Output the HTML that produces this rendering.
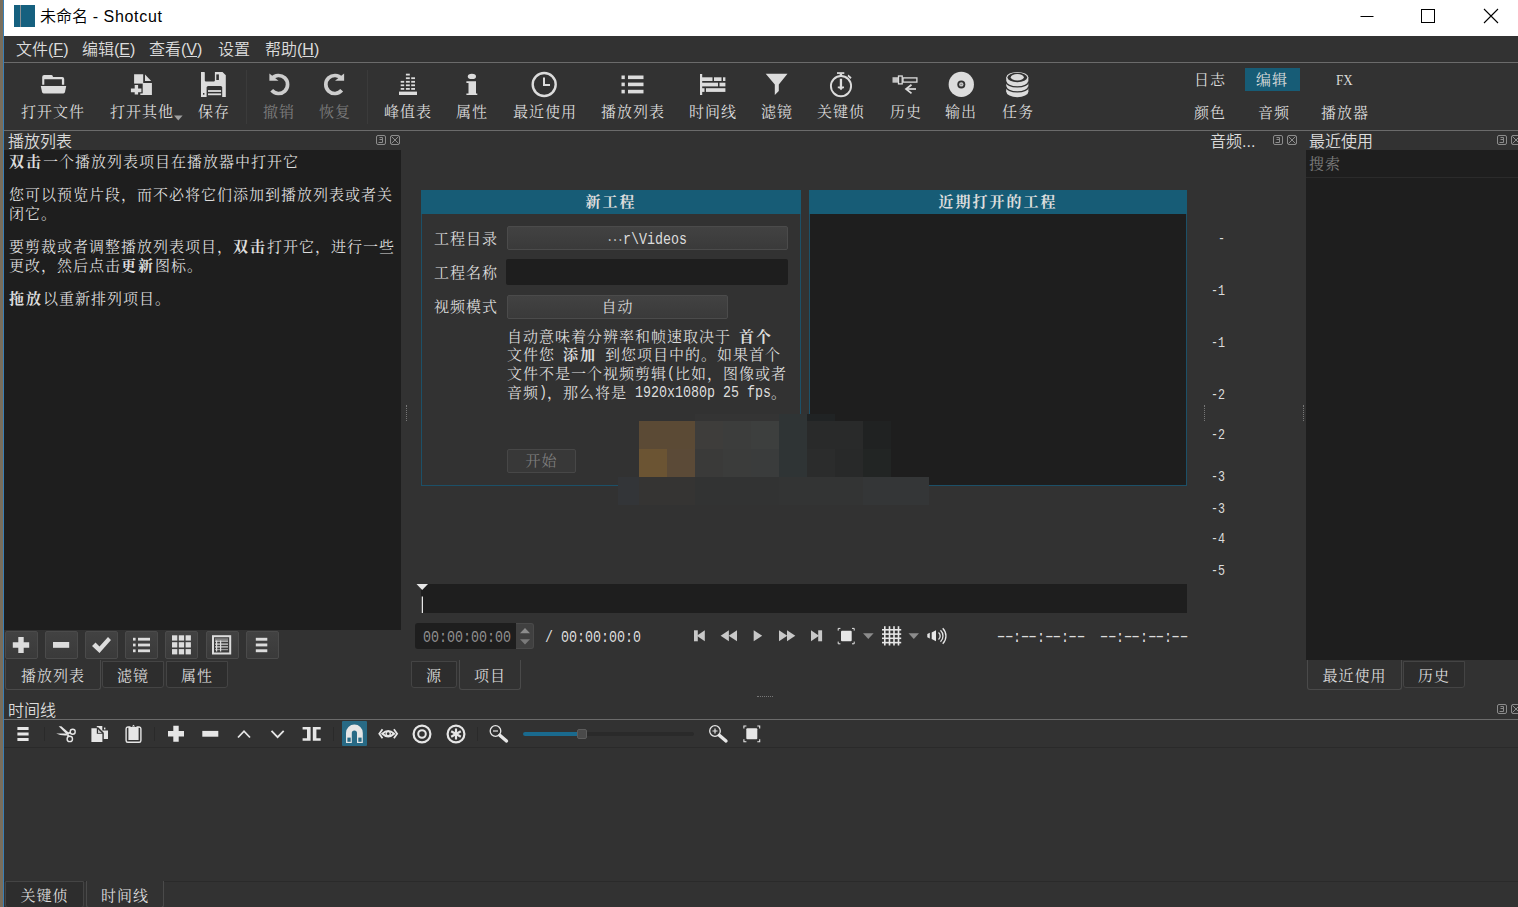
<!DOCTYPE html>
<html lang="zh-CN">
<head>
<meta charset="utf-8">
<title>未命名 - Shotcut</title>
<style>
*{box-sizing:border-box;margin:0;padding:0}
html,body{width:1518px;height:907px;overflow:hidden;background:#323232}
body{position:relative;color:#dcdcdc;word-spacing:3.25px;font-family:"Liberation Serif","Noto Serif CJK SC",serif;font-size:15px;letter-spacing:1px;line-height:18px}
.a{position:absolute}
.ui{font-family:"Liberation Sans","Noto Sans CJK SC",sans-serif;font-size:16px;letter-spacing:0;word-spacing:0;font-weight:350}
.mono{font-family:"Liberation Mono","Noto Serif CJK SC",monospace;font-size:13.4px;letter-spacing:0}
.t{position:absolute;white-space:nowrap;line-height:18px;height:18px}
.sm{font-family:"Liberation Mono",monospace;font-size:16px;letter-spacing:0;word-spacing:0;transform:scaleX(.8333);transform-origin:0 50%}
.sm2{font-family:"Liberation Mono",monospace;font-size:15px;letter-spacing:0;word-spacing:0;transform:scaleX(.7777);transform-origin:0 50%}
.dh{display:inline-block;transform:scaleX(1.7);position:relative;top:-1px}
.dark{background:#1e1e1e}
.hl{background:#175c76}
.dim{color:#7d7d7d}
b{font-weight:700;letter-spacing:2px}
svg{position:absolute;overflow:visible}
.tab{position:absolute;height:27px;border:1px solid #444;border-radius:0 0 3px 3px;text-align:center;line-height:28px;background:#2d2d2d}
.tab.sel{background:#323232;height:30px;border-color:#4a4a4a;border-top:none;line-height:33px}
.btn{position:absolute;border:1px solid #4b4b4b;border-radius:2px;background:linear-gradient(#424242,#3a3a3a);text-align:center}
.sep{position:absolute;width:1px;background:#454545}
</style>
</head>
<body>
<!-- desktop edge + window border -->
<div class="a" style="left:0;top:0;width:3px;height:907px;background:#786d5c"></div>
<div class="a" style="left:3px;top:0;width:1px;height:907px;background:#3a7fb5"></div>

<!-- title bar -->
<div class="a" id="titlebar" style="left:4px;top:0;width:1514px;height:36px;background:#fff"></div>
<div class="a" style="left:14px;top:5px;width:21px;height:22px;background:#15607f"></div>
<div class="a" style="left:20px;top:5px;width:1px;height:22px;background:#8a8f93"></div>
<div class="t ui" style="left:40px;top:7px;color:#000;font-size:16px;line-height:20px;height:20px">未命名<span style="letter-spacing:.7px;word-spacing:-0.400px"> - Shotcut</span></div>
<svg style="left:1355px;top:5px" width="160" height="24" viewBox="0 0 160 24">
 <path d="M5.5 11.5H18.5" stroke="#000" stroke-width="1" fill="none"/>
 <rect x="66.5" y="4.5" width="13" height="13" stroke="#000" stroke-width="1" fill="none"/>
 <path d="M129 4L143 18M143 4L129 18" stroke="#000" stroke-width="1.1" fill="none"/>
</svg>

<!-- menu bar -->
<div id="menubar" class="ui" style="font-size:16px">
 <div class="t" style="left:16px;top:41px">文件(<u>F</u>)</div>
 <div class="t" style="left:82px;top:41px">编辑(<u>E</u>)</div>
 <div class="t" style="left:149px;top:41px">查看(<u>V</u>)</div>
 <div class="t" style="left:218px;top:41px">设置</div>
 <div class="t" style="left:265px;top:41px">帮助(<u>H</u>)</div>
</div>
<div class="a" style="left:4px;top:62px;width:1514px;height:1px;background:#6b6b6b"></div>

<!-- main toolbar -->
<div id="toolbar">
 <div class="t" style="left:21px;top:103px">打开文件</div>
 <div class="t" style="left:110px;top:103px">打开其他</div>
 <div class="t" style="left:198px;top:103px">保存</div>
 <div class="t dim" style="left:263px;top:103px">撤销</div>
 <div class="t dim" style="left:319px;top:103px">恢复</div>
 <div class="t" style="left:384px;top:103px">峰值表</div>
 <div class="t" style="left:456px;top:103px">属性</div>
 <div class="t" style="left:513px;top:103px">最近使用</div>
 <div class="t" style="left:601px;top:103px">播放列表</div>
 <div class="t" style="left:689px;top:103px">时间线</div>
 <div class="t" style="left:761px;top:103px">滤镜</div>
 <div class="t" style="left:817px;top:103px">关键侦</div>
 <div class="t" style="left:890px;top:103px">历史</div>
 <div class="t" style="left:945px;top:103px">输出</div>
 <div class="t" style="left:1002px;top:103px">任务</div>
 <div class="sep" style="left:246px;top:70px;height:54px;background:#3b3b3b"></div>
 <div class="sep" style="left:367px;top:70px;height:54px;background:#3b3b3b"></div>
 <div class="a hl" style="left:1245px;top:68px;width:55px;height:23px"></div>
 <div class="t" style="left:1194px;top:71px">日志</div>
 <div class="t" style="left:1256px;top:71px">编辑</div>
 <div class="t" style="left:1336px;top:71px;letter-spacing:0;font-size:15.500px;transform:scaleX(.84);transform-origin:0 50%">FX</div>
 <div class="t" style="left:1194px;top:104px">颜色</div>
 <div class="t" style="left:1258px;top:104px">音频</div>
 <div class="t" style="left:1321px;top:104px">播放器</div>
 <svg style="left:0;top:63px" width="1518" height="67" viewBox="0 63 1518 67" fill="#dcdcdc">
  <!-- open file: folder -->
  <path d="M42.200 84.700V77Q42.200 75 44.200 75H51.500Q52.800 75 53 77H62.200Q64.200 77 64.200 79V84.700H61.900V79.300H44.300V84.700Z"/>
  <path d="M40.800 86H66.200L65 92Q64.700 93.400 63.400 93.400H43.600Q42.300 93.400 42 92Z"/>
  <!-- open other: doc with plus -->
  <path d="M134.100 74.200H143.200V82.900H151.900V95H134.100Z"/>
  <path d="M145 74.500L151.200 81H145Z"/>
  <rect x="129.500" y="83.600" width="13.200" height="12" fill="#323232"/>
  <rect x="140.300" y="93.400" width="3" height="1.600"/>
  <path d="M134.700 85H138.100V88.400H141.400V92.200H138.100V94.500H134.700V92.200H130.900V88.400H134.700Z"/>
  <path d="M174 115.500H182.600L178.300 120.500Z" fill="#a0a0a0"/>
  <!-- save: floppy -->
  <path d="M201 72H222.500L225.800 75.300V97H201Z"/>
  <g fill="#323232">
   <rect x="204.800" y="71.500" width="10.100" height="9.900" rx="0.800"/>
   <rect x="216.300" y="74.400" width="2.600" height="5.600"/>
   <path d="M206.600 97.500V87.600Q206.600 86.100 208.100 86.100H220.700Q222.200 86.100 222.200 87.600V97.500Z"/>
   <rect x="203" y="93" width="1.400" height="1.700"/>
  </g>
  <rect x="208" y="90.100" width="13.100" height="1.800"/>
  <rect x="208" y="93.400" width="13.100" height="1.800"/>
  <!-- undo -->
  <g fill="none" stroke="#cdcdcd" stroke-width="3.700">
   <path d="M271.700 78.700A9 9 0 1 1 271.700 90.300"/>
   <path d="M341.700 78.700A9 9 0 1 0 341.700 90.300"/>
  </g>
  <path d="M269.400 73.600V80.800H278.500Z" fill="#cdcdcd"/>
  <path d="M344.100 73.600V80.800H335Z" fill="#cdcdcd"/>
  <!-- peak meter -->
  <g>
   <rect x="399" y="91.600" width="18" height="3.400"/>
   <rect x="400.7" y="80.90" width="3.500" height="1.800"/><rect x="400.7" y="84.40" width="3.500" height="1.800"/><rect x="400.7" y="88.00" width="3.500" height="1.800"/><rect x="405.9" y="73.70" width="3.900" height="1.800"/><rect x="405.9" y="77.30" width="3.900" height="1.800"/><rect x="405.9" y="80.90" width="3.900" height="1.800"/><rect x="405.9" y="84.40" width="3.900" height="1.800"/><rect x="405.9" y="88.00" width="3.900" height="1.800"/><rect x="411.2" y="77.30" width="3.800" height="1.800"/><rect x="411.2" y="80.90" width="3.800" height="1.800"/><rect x="411.2" y="84.40" width="3.800" height="1.800"/><rect x="411.2" y="88.00" width="3.800" height="1.800"/>
  </g>
  <!-- info -->
  <ellipse cx="471.900" cy="76.400" rx="4.100" ry="2.700"/>
  <path d="M466.400 81.200H476V93.400H477.300V95H466.400V93.400H468.500V83H466.400Z"/>
  <!-- recent: clock -->
  <circle cx="544.200" cy="84.500" r="11.500" fill="none" stroke="#dcdcdc" stroke-width="2.400"/>
  <path d="M543 77.500H545V84H550V86H543Z"/>
  <!-- playlist -->
  <g>
   <rect x="621.500" y="75.500" width="3.300" height="3.600"/><rect x="628" y="75.500" width="15.500" height="3.600"/>
   <rect x="621.500" y="82.600" width="3.300" height="3.600"/><rect x="628" y="82.600" width="15.500" height="3.600"/>
   <rect x="621.500" y="89.800" width="3.300" height="3.600"/><rect x="628" y="89.800" width="15.500" height="3.600"/>
  </g>
  <!-- timeline -->
  <g>
   <rect x="700" y="74" width="2.200" height="21"/>
   <rect x="702" y="77.300" width="10.500" height="3.700"/><rect x="714" y="77.300" width="7.500" height="3.700"/><rect x="723" y="77.300" width="2.400" height="3.700"/>
   <rect x="702" y="82.700" width="16" height="3.700"/><rect x="719.500" y="82.700" width="5.900" height="3.700"/>
   <rect x="702" y="88.200" width="2.500" height="3.700"/><rect x="706" y="88.200" width="19.400" height="3.700"/>
  </g>
  <!-- filter -->
  <path d="M765.700 73.800H787.500L778.800 84.500V91L774.800 95V84.500Z"/>
  <!-- keyframes: stopwatch -->
  <circle cx="841" cy="86.100" r="10.100" fill="none" stroke="#dcdcdc" stroke-width="1.900"/>
  <rect x="837" y="72.200" width="7.300" height="1.700"/><rect x="839.700" y="73.500" width="2.400" height="2.800"/>
  <path d="M848.300 74.600L851.600 77.600L850.300 79L847.600 76.200Z"/>
  <path d="M839.800 78.700H842.100V86.600H844V88.200H842.800L841 90.200L839.200 88.200H837.800V86.600H839.800Z"/>
  <!-- history -->
  <rect x="892.500" y="77.200" width="5.600" height="5.500" fill="#c4c4c4"/>
  <rect x="898.500" y="76" width="3.700" height="7.900" fill="none" stroke="#dcdcdc" stroke-width="1.300"/>
  <rect x="903" y="77.900" width="13.900" height="4.200" fill="none" stroke="#dcdcdc" stroke-width="1.300"/>
  <path d="M916 89H906.500" stroke="#dcdcdc" stroke-width="1.700" fill="none"/>
  <path d="M911.500 84.800L906 89L911.500 93.300" stroke="#dcdcdc" stroke-width="1.700" fill="none"/>
  <!-- export: disc -->
  <circle cx="961.300" cy="84.400" r="12.650"/>
  <circle cx="961.300" cy="84.400" r="4" fill="#323232"/><circle cx="961.300" cy="84.400" r="2.200" fill="#c4c4c4"/><ellipse cx="961.300" cy="84.400" rx="1.100" ry="0.600" fill="#8a8a8a"/>
  <!-- jobs: stack -->
  <g>
   <ellipse cx="1017.300" cy="91.700" rx="11.050" ry="5.500"/>
   <rect x="1006.250" y="77.500" width="22.100" height="14.200"/>
   <ellipse cx="1017.300" cy="77.500" rx="11.050" ry="5.500"/>
   <ellipse cx="1017.300" cy="77.500" rx="9.900" ry="4.700" fill="#323232"/>
   <ellipse cx="1017.300" cy="77.300" rx="6.500" ry="3.200"/>
   <g fill="none" stroke="#323232" stroke-width="1.300">
    <path d="M1006 81.500A11.300 5.400 0 0 0 1028.600 81.500"/>
    <path d="M1006 86.500A11.300 5.400 0 0 0 1028.600 86.500"/>
   </g>
  </g>
 </svg>
</div>
<div class="a" style="left:4px;top:130px;width:1514px;height:1px;background:#6b6b6b"></div>

<!-- playlist dock -->
<div id="playlist">
 <div class="t ui" style="left:8px;top:132px;line-height:20px;height:20px">播放列表</div>
 <svg style="left:376px;top:135px" width="24" height="10" viewBox="0 0 24 10" fill="none" stroke="#8c8c8c" stroke-width="1">
  <rect x="0.500" y="0.500" width="9" height="9" rx="1.500"/><path d="M3.500 2.500H6.500V7.500H2.500M6.500 4.500H3.500"/>
  <rect x="14.500" y="0.500" width="9" height="9" rx="1.500"/><path d="M15.500 1.500L22.500 8.500M22.500 1.500L15.500 8.500"/>
 </svg>
 <div class="a dark" style="left:4px;top:150px;width:397px;height:480px"></div>
 <div class="t" style="left:9px;top:153px"><b>双击</b>一个播放列表项目在播放器中打开它</div>
 <div class="t" style="left:9px;top:186px">您可以预览片段，而不必将它们添加到播放列表或者关</div>
 <div class="t" style="left:9px;top:205px">闭它。</div>
 <div class="t" style="left:9px;top:238px">要剪裁或者调整播放列表项目，<b>双击</b>打开它，进行一些</div>
 <div class="t" style="left:9px;top:257px">更改，然后点击<b>更新</b>图标。</div>
 <div class="t" style="left:9px;top:290px"><b>拖放</b>以重新排列项目。</div>
 <div class="btn" style="left:5px;top:631px;width:33px;height:28px"></div>
 <div class="btn" style="left:45px;top:631px;width:33px;height:28px"></div>
 <div class="btn" style="left:85px;top:631px;width:33px;height:28px"></div>
 <div class="btn" style="left:125px;top:631px;width:33px;height:28px"></div>
 <div class="btn" style="left:165px;top:631px;width:33px;height:28px"></div>
 <div class="btn" style="left:206px;top:631px;width:33px;height:28px"></div>
 <div class="btn" style="left:246px;top:631px;width:33px;height:28px"></div>
 <svg style="left:0;top:631px" width="300" height="28" viewBox="0 631 300 28" fill="#dcdcdc">
  <path d="M18.300 637H23.700V642.300H29.200V647.700H23.700V653H18.300V647.700H12.800V642.300H18.300Z"/>
  <rect x="53" y="642" width="16.200" height="5.800"/>
  <path d="M92 646L95.500 642.500L99.500 646.500L108 637L111 640L99.500 653Z"/>
  <g>
   <rect x="133" y="637.800" width="2.600" height="2.800"/><rect x="138" y="637.800" width="12" height="2.800"/>
   <rect x="133" y="643.600" width="2.600" height="2.800"/><rect x="138" y="643.600" width="12" height="2.800"/>
   <rect x="133" y="649.400" width="2.600" height="2.800"/><rect x="138" y="649.400" width="12" height="2.800"/>
  </g>
  <g>
   <rect x="172" y="635.300" width="5.300" height="5.300"/><rect x="178.800" y="635.300" width="5.300" height="5.300"/><rect x="185.600" y="635.300" width="5.300" height="5.300"/>
   <rect x="172" y="642.200" width="5.300" height="5.300"/><rect x="178.800" y="642.200" width="5.300" height="5.300"/><rect x="185.600" y="642.200" width="5.300" height="5.300"/>
   <rect x="172" y="649.100" width="5.300" height="5.300"/><rect x="178.800" y="649.100" width="5.300" height="5.300"/><rect x="185.600" y="649.100" width="5.300" height="5.300"/>
  </g>
  <g>
   <rect x="213" y="636.200" width="17.200" height="17.300" fill="none" stroke="#dcdcdc" stroke-width="2"/>
   <rect x="215" y="638.500" width="13" height="1.200" fill="#9a9a9a"/><rect x="215" y="640.500" width="13" height="1.200"/>
   <rect x="215" y="643.500" width="13" height="1.200"/><rect x="215" y="646.300" width="13" height="1.200"/><rect x="215" y="649" width="13" height="1.200" fill="#9a9a9a"/>
   <rect x="216" y="640.500" width="1.200" height="11"/><rect x="220" y="640.500" width="1.200" height="11"/>
  </g>
  <g>
   <rect x="255.800" y="637.800" width="11.500" height="2.900"/><rect x="255.800" y="643.500" width="11.500" height="2.900"/><rect x="255.800" y="649.300" width="11.500" height="2.900"/>
  </g>
 </svg>
 <div class="tab" style="left:102px;top:661px;width:62px">滤镜</div>
 <div class="tab" style="left:166px;top:661px;width:62px">属性</div>
 <div class="tab sel" style="left:5px;top:660px;width:96px">播放列表</div>
</div>

<!-- player -->
<div id="player">
 <!-- new project box -->
 <div class="a" style="left:421px;top:190px;width:380px;height:296px;border:1px solid #1c5068"></div>
 <div class="a hl" style="left:421px;top:190px;width:380px;height:24px;text-align:center;line-height:24px"><b>新工程</b></div>
 <div class="t" style="left:434px;top:230px">工程目录</div>
 <div class="btn" style="left:507px;top:226px;width:281px;height:24px;line-height:23px"><span class="a" style="left:99px;top:1px;font-family:'Noto Serif CJK SC',serif;letter-spacing:0;font-size:16px">…</span><span class="a sm" style="left:115px;top:2px;white-space:nowrap">r\Videos</span></div>
 <div class="t" style="left:434px;top:264px">工程名称</div>
 <div class="a dark" style="left:506px;top:259px;width:282px;height:26px;border-radius:2px"></div>
 <div class="t" style="left:434px;top:298px">视频模式</div>
 <div class="btn" style="left:507px;top:295px;width:221px;height:24px;line-height:23px">自动</div>
 <div class="t" style="left:507px;top:328px">自动意味着分辨率和帧速取决于 <b>首个</b></div>
 <div class="t" style="left:507px;top:346px">文件您 <b>添加</b> 到您项目中的。如果首个</div>
 <div class="t" style="left:507px;top:365px">文件不是一个视频剪辑<span class="a sm" style="left:160px">(</span><span style="margin-left:8px">比如，图像或者</span></div>
 <div class="t" style="left:507px;top:384px">音频<span class="a sm" style="left:32px">)</span><span style="margin-left:8px">，那么将是</span><span class="a sm" style="left:128px;white-space:nowrap">1920x1080p 25 fps</span><span class="a" style="left:264px">。</span></div>
 <div class="btn dim" style="left:507px;top:449px;width:69px;height:24px;line-height:23px;background:#383838;border-color:#474747">开始</div>
 <!-- recent projects box -->
 <div class="a dark" style="left:809px;top:190px;width:378px;height:296px;border:1px solid #1c5068"></div>
 <div class="a hl" style="left:809px;top:190px;width:378px;height:24px;text-align:center;line-height:24px"><b>近期打开的工程</b></div>
 <!-- pixelated patch -->
 <div class="a" style="left:695px;top:414px;width:84px;height:7px;background:#343434"></div>
 <div class="a" style="left:779px;top:414px;width:28px;height:7px;background:#2f3435"></div>
 <div class="a" style="left:807px;top:414px;width:28px;height:7px;background:#202324"></div>
 <div class="a" style="left:639px;top:421px;width:56px;height:28px;background:#5b4a35"></div>
 <div class="a" style="left:695px;top:421px;width:28px;height:28px;background:#3e3d3b"></div>
 <div class="a" style="left:723px;top:421px;width:28px;height:28px;background:#3c3d3c"></div>
 <div class="a" style="left:751px;top:421px;width:28px;height:28px;background:#3d3f3e"></div>
 <div class="a" style="left:779px;top:421px;width:28px;height:28px;background:#2f3435"></div>
 <div class="a" style="left:807px;top:421px;width:56px;height:28px;background:#292a2a"></div>
 <div class="a" style="left:863px;top:421px;width:28px;height:28px;background:#202222"></div>
 <div class="a" style="left:639px;top:449px;width:28px;height:28px;background:#6b5433"></div>
 <div class="a" style="left:667px;top:449px;width:28px;height:28px;background:#5b4a37"></div>
 <div class="a" style="left:695px;top:449px;width:28px;height:28px;background:#3a3a39"></div>
 <div class="a" style="left:723px;top:449px;width:28px;height:28px;background:#3b3c3b"></div>
 <div class="a" style="left:751px;top:449px;width:28px;height:28px;background:#3a3c3c"></div>
 <div class="a" style="left:779px;top:449px;width:28px;height:28px;background:#2f3435"></div>
 <div class="a" style="left:807px;top:449px;width:28px;height:28px;background:#2b2c2c"></div>
 <div class="a" style="left:835px;top:449px;width:28px;height:28px;background:#282929"></div>
 <div class="a" style="left:863px;top:449px;width:28px;height:28px;background:#222524"></div>
 <div class="a" style="left:618px;top:477px;width:21px;height:28px;background:#333538"></div>
 <div class="a" style="left:639px;top:477px;width:56px;height:28px;background:#353433"></div>
 <div class="a" style="left:695px;top:477px;width:84px;height:28px;background:#323333"></div>
 <div class="a" style="left:779px;top:477px;width:84px;height:28px;background:#333434"></div>
 <div class="a" style="left:863px;top:477px;width:66px;height:28px;background:#343637"></div>
 <!-- scrub bar -->
 <div class="a dark" style="left:421px;top:584px;width:766px;height:29px"></div>
 <svg style="left:414px;top:582px" width="20" height="32" viewBox="414 582 20 32"><path d="M416.500 584H428L422.200 590Z" fill="#e6e6e6"/><rect x="421.700" y="596.500" width="1.300" height="16.500" fill="#e6e6e6"/></svg>
 <!-- timecode -->
 <div class="a dark" style="left:415px;top:623px;width:101px;height:26px;border-radius:3px 0 0 3px"></div>
 <div class="a" style="left:516px;top:623px;width:18px;height:26px;background:#404040;border:1px solid #4a4a4a;border-left:none;border-radius:0 3px 3px 0"></div>
 <div class="t sm" style="left:423px;top:629px;color:#8f8f8f">00:00:00:00</div>
 <div class="t sm" style="left:545px;top:629px;width:115px;overflow:hidden">/ 00:00:00:00</div>
 <div class="t sm" style="left:997px;top:629px"><span class="dh">-</span><span class="dh">-</span>:<span class="dh">-</span><span class="dh">-</span>:<span class="dh">-</span><span class="dh">-</span>:<span class="dh">-</span><span class="dh">-</span></div>
 <div class="t sm" style="left:1100px;top:629px"><span class="dh">-</span><span class="dh">-</span>:<span class="dh">-</span><span class="dh">-</span>:<span class="dh">-</span><span class="dh">-</span>:<span class="dh">-</span><span class="dh">-</span></div>
 <svg style="left:500px;top:620px" width="460" height="32" viewBox="500 620 460 32" fill="#c8c8c8">
  <path d="M520 633.200H530L525 628Z" fill="#8c8c8c"/><path d="M520 639.200H530L525 644.600Z" fill="#7a7a7a"/>
  <!-- skip prev -->
  <rect x="694" y="630.300" width="3.800" height="11"/><path d="M704.800 630.300V641.300L696.800 635.800Z"/>
  <!-- rewind -->
  <path d="M728.900 630.300V641.300L720.600 635.800Z"/><path d="M737 630.300V641.300L728.700 635.800Z"/>
  <!-- play -->
  <path d="M753.700 630.200V641.300L762.200 635.800Z"/>
  <!-- ff -->
  <path d="M779 630.300V641.300L787.300 635.800Z"/><path d="M787 630.300V641.300L795.300 635.800Z"/>
  <!-- skip next -->
  <path d="M811 630.300V641.300L819 635.800Z"/><rect x="818.200" y="630.300" width="3.900" height="11"/>
  <!-- zoom fit -->
  <rect x="841" y="630.800" width="10.700" height="10.500" rx="1" fill="#e6e6e6"/>
  <path d="M838.200 630.600V628.400H840.400M852 628.400H854.200V630.600M854.200 641.600V643.800H852M840.400 643.800H838.200V641.600" fill="none" stroke="#e6e6e6" stroke-width="1"/>
  <path d="M863 633.300H873.600L868.300 639Z" fill="#8c8c8c"/>
  <!-- grid -->
  <g fill="#e6e6e6">
   <rect x="884" y="626.200" width="1.600" height="19.300"/><rect x="888.700" y="626.200" width="1.600" height="19.300"/><rect x="893.200" y="626.200" width="1.600" height="19.300"/><rect x="897.700" y="626.200" width="1.600" height="19.300"/>
   <rect x="882" y="629" width="19.200" height="1.600"/><rect x="882" y="633.300" width="19.200" height="1.600"/><rect x="882" y="637.500" width="19.200" height="1.600"/><rect x="882" y="641.800" width="19.200" height="1.600"/>
  </g>
  <path d="M908.500 633.300H919L913.800 639Z" fill="#8c8c8c"/>
  <!-- volume -->
  <g fill="#e6e6e6">
   <path d="M927.300 634L929.800 632.800V638.400L927.300 637.200Z"/>
   <path d="M931.700 632.400L936 630.200V641.200L931.700 639Z"/>
  </g>
  <g fill="none" stroke="#e6e6e6" stroke-width="1.300">
   <path d="M938.500 632.500A4.500 4.500 0 0 1 938.500 639.500"/>
   <path d="M940.500 630.200A8 8 0 0 1 940.500 641.800"/>
   <path d="M942.700 628.200A11 11 0 0 1 942.700 643.800"/>
  </g>
 </svg>
 <div class="tab" style="left:411px;top:661px;width:46px">源</div>
 <div class="tab sel" style="left:459px;top:660px;width:62px">项目</div>
 <!-- splitter handles -->
 <div class="a" style="left:406px;top:405px;width:1px;height:16px;border-left:1px dotted #777"></div>
 <div class="a" style="left:1204px;top:405px;width:1px;height:16px;border-left:1px dotted #777"></div>
 <div class="a" style="left:1303px;top:405px;width:1px;height:16px;border-left:1px dotted #777"></div>
 <div class="a" style="left:757px;top:696px;width:16px;height:1px;border-top:1px dotted #777"></div>
</div>

<!-- audio meter dock -->
<div id="audio">
 <div class="t ui" style="left:1210px;top:132px;line-height:20px;height:20px">音频...</div>
 <svg style="left:1273px;top:135px" width="24" height="10" viewBox="0 0 24 10" fill="none" stroke="#8c8c8c" stroke-width="1">
  <rect x="0.500" y="0.500" width="9" height="9" rx="1.500"/><path d="M3.500 2.500H6.500V7.500H2.500M6.500 4.500H3.500"/>
  <rect x="14.500" y="0.500" width="9" height="9" rx="1.500"/><path d="M15.500 1.500L22.500 8.500M22.500 1.500L15.500 8.500"/>
 </svg>
 <div class="t sm2" style="left:1218px;top:231px">-</div>
 <div class="t sm2" style="left:1211px;top:283px">-1</div>
 <div class="t sm2" style="left:1211px;top:335px">-1</div>
 <div class="t sm2" style="left:1211px;top:387px">-2</div>
 <div class="t sm2" style="left:1211px;top:427px">-2</div>
 <div class="t sm2" style="left:1211px;top:469px">-3</div>
 <div class="t sm2" style="left:1211px;top:501px">-3</div>
 <div class="t sm2" style="left:1211px;top:531px">-4</div>
 <div class="t sm2" style="left:1211px;top:563px">-5</div>
</div>

<!-- recent dock -->
<div id="recent">
 <div class="t ui" style="left:1309px;top:132px;line-height:20px;height:20px">最近使用</div>
 <svg style="left:1497px;top:135px" width="24" height="10" viewBox="0 0 24 10" fill="none" stroke="#8c8c8c" stroke-width="1">
  <rect x="0.500" y="0.500" width="9" height="9" rx="1.500"/><path d="M3.500 2.500H6.500V7.500H2.500M6.500 4.500H3.500"/>
  <rect x="14.500" y="0.500" width="9" height="9" rx="1.500"/><path d="M15.500 1.500L22.500 8.500M22.500 1.500L15.500 8.500"/>
 </svg>
 <div class="a dark" style="left:1306px;top:150px;width:212px;height:510px"></div>
 <div class="a" style="left:1306px;top:177px;width:212px;height:1px;background:#2b2b2b"></div>
 <div class="t" style="left:1309px;top:155px;color:#7e7e7e">搜索</div>
 <div class="tab" style="left:1403px;top:661px;width:62px">历史</div>
 <div class="tab sel" style="left:1307px;top:660px;width:95px">最近使用</div>
</div>

<!-- timeline dock -->
<div id="timeline">
 <div class="t ui" style="left:8px;top:701px;line-height:20px;height:20px">时间线</div>
 <svg style="left:1497px;top:704px" width="24" height="10" viewBox="0 0 24 10" fill="none" stroke="#8c8c8c" stroke-width="1">
  <rect x="0.500" y="0.500" width="9" height="9" rx="1.500"/><path d="M3.500 2.500H6.500V7.500H2.500M6.500 4.500H3.500"/>
  <rect x="14.500" y="0.500" width="9" height="9" rx="1.500"/><path d="M15.500 1.500L22.500 8.500M22.500 1.500L15.500 8.500"/>
 </svg>
 <div class="a" style="left:4px;top:719px;width:1514px;height:1px;background:#6b6b6b"></div>
 <div class="a" style="left:4px;top:747px;width:1514px;height:1px;background:#2a2a2a"></div>
 <div class="sep" style="left:44px;top:727px;height:14px;background:#2a2a2a"></div>
 <div class="sep" style="left:154px;top:727px;height:14px;background:#2a2a2a"></div>
 <div class="sep" style="left:333px;top:727px;height:14px;background:#2a2a2a"></div>
 <div class="sep" style="left:477px;top:727px;height:14px;background:#2a2a2a"></div>
 <div class="a" style="left:342px;top:721px;width:25px;height:25px;background:#286a85;border-radius:1px"></div>
 <!-- slider -->
 <div class="a" style="left:523px;top:732px;width:171px;height:4px;background:#2a2a2a;border-radius:2px"></div>
 <div class="a" style="left:523px;top:732px;width:58px;height:4px;background:#1a6a8e;border-radius:2px"></div>
 <div class="a" style="left:577px;top:729px;width:10px;height:10px;background:#4a4a4a;border:1px solid #5c5c5c;border-radius:2px"></div>
 <svg style="left:0;top:720px" width="800" height="27" viewBox="0 720 800 27" fill="#e6e6e6">
  <!-- menu -->
  <rect x="17.400" y="727" width="11.200" height="3"/><rect x="17.400" y="732.500" width="11.200" height="3"/><rect x="17.400" y="738" width="11.200" height="3"/>
  <!-- scissors -->
  <path d="M58.700 726.200H61.300L68.600 732.600L66.600 734.300Z"/>
  <path d="M56.200 733.400H66L68.300 735.200Q61 736 56.200 733.400Z"/>
  <g fill="none" stroke="#e6e6e6" stroke-width="1.400">
   <circle cx="72.700" cy="731.700" r="2.500"/>
   <circle cx="69.800" cy="738.900" r="2.700"/>
   <path d="M67 733.700L70.400 732.600M67.600 734.500L68.800 736.400" stroke-width="1.800"/>
  </g>
  <!-- copy -->
  <path d="M91.400 728.200H96.800V733.700H102.400V741.900H91.400Z"/>
  <path d="M98 729.200L101.800 733H98Z" fill="#c8c8c8"/>
  <path d="M96.800 726H102.300V730.600H108V739H103.800V732.800L98.200 727.300H96.800Z"/>
  <rect x="104" y="727.600" width="1.400" height="1.800"/>
  <!-- paste -->
  <path d="M130.500 727H127.800Q126.100 727 126.100 728.800V740.500Q126.100 742.300 127.800 742.300H139.200Q140.900 742.300 140.900 740.500V728.800Q140.900 727 139.200 727H136.500" fill="none" stroke="#e6e6e6" stroke-width="1.400"/>
  <rect x="128.400" y="727" width="10.200" height="13"/>
  <path d="M131.800 726.400H135.200L133.500 724.700Z"/>
  <!-- plus / minus -->
  <path d="M173.300 725.800H178.700V731.100H184V736.500H178.700V741.800H173.300V736.500H168V731.100H173.300Z"/>
  <rect x="202.300" y="730.900" width="16" height="5.800"/>
  <!-- chevrons -->
  <g fill="none" stroke="#e6e6e6" stroke-width="1.800"><path d="M238 737.500L244 731.200L250 737.500"/><path d="M271.500 730.800L277.600 737.200L283.700 730.800"/></g>
  <!-- ripple -->
  <path d="M302.600 727H310.600V740.700H302.600V738.200H307V729.500H302.600Z"/>
  <path d="M320.700 727H312.800V740.700H320.700V738.200H316.400V729.500H320.700Z"/>
  <!-- magnet -->
  <path d="M346 743V733A8.400 8.400 0 0 1 362.800 733V743H357V733A2.600 2.600 0 0 0 351.800 733V743Z"/>
  <rect x="347.400" y="737.600" width="3.300" height="4.200" fill="#286a85"/><rect x="358.300" y="737.600" width="3.300" height="4.200" fill="#286a85"/>
  <!-- eye (scrub while dragging) -->
  <g fill="none" stroke="#e6e6e6">
   <path d="M382.300 733.700Q388.200 728.200 394.100 733.700Q388.200 739.200 382.300 733.700Z" stroke-width="1.900"/>
   <path d="M382.500 729.300L379.300 733.700L382.500 738.200" stroke-width="1.800"/><path d="M393.900 729.300L397.100 733.700L393.900 738.200" stroke-width="1.800"/>
   <circle cx="388.200" cy="733.700" r="2.100" stroke-width="1.400"/>
  </g>
  <!-- ripple all tracks -->
  <circle cx="422" cy="734" r="8.400" fill="none" stroke="#e6e6e6" stroke-width="2.200"/>
  <circle cx="422" cy="734" r="3.800" fill="none" stroke="#e6e6e6" stroke-width="2"/>
  <!-- ripple markers -->
  <circle cx="456" cy="734" r="8.400" fill="none" stroke="#e6e6e6" stroke-width="2.200"/>
  <g stroke="#e6e6e6" stroke-width="2.200"><path d="M456 728.500V739.500"/><path d="M451.200 731.200L460.800 736.800"/><path d="M460.800 731.200L451.200 736.800"/></g>
  <!-- zoom out -->
  <circle cx="495.500" cy="731" r="5.300" fill="none" stroke="#e6e6e6" stroke-width="1.300"/>
  <path d="M493 731H498" stroke="#e6e6e6" stroke-width="1.200"/>
  <path d="M499.800 735.300L506.500 741" stroke="#e6e6e6" stroke-width="3.400" stroke-linecap="round"/>
  <!-- zoom in -->
  <circle cx="715" cy="731" r="5.300" fill="none" stroke="#e6e6e6" stroke-width="1.300"/>
  <path d="M712.500 731H717.500M715 728.500V733.500" stroke="#e6e6e6" stroke-width="1.200"/>
  <path d="M719.300 735.300L726 741" stroke="#e6e6e6" stroke-width="3.400" stroke-linecap="round"/>
  <!-- zoom fit -->
  <rect x="746.300" y="728.300" width="11" height="11" rx="1"/>
  <path d="M743.900 728.500V726H746.400M757.300 726H759.700V728.500M759.700 739.300V741.800H757.300M746.400 741.800H743.900V739.300" fill="none" stroke="#e6e6e6" stroke-width="1.100"/>
 </svg>
 <div class="a" style="left:4px;top:881px;width:1514px;height:1px;background:#2a2a2a"></div>
 <div class="tab" style="left:5px;top:881px;width:79px;height:27px">关键侦</div>
 <div class="tab sel" style="left:86px;top:881px;width:78px;height:27px;line-height:31px">时间线</div>
</div>
</body>
</html>
